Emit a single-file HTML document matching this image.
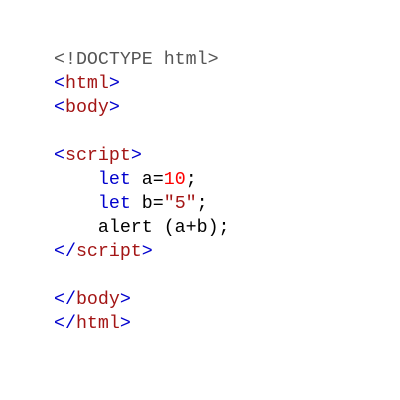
<!DOCTYPE html>
<html><head><style>
body{margin:0;width:400px;height:400px;background:#fff;}
pre{position:absolute;left:54px;top:48px;margin:0;font-family:"Liberation Mono",monospace;font-size:18.3px;line-height:24px;color:#000;}
.g{color:#555}.b{color:#0000cd}.r{color:#a31515}.n{color:#f00}.k{color:#0000cd}
</style></head><body><pre><span class="g">&lt;!DOCTYPE html&gt;</span>
<span class="b">&lt;</span><span class="r">html</span><span class="b">&gt;</span>
<span class="b">&lt;</span><span class="r">body</span><span class="b">&gt;</span>

<span class="b">&lt;</span><span class="r">script</span><span class="b">&gt;</span>
    <span class="k">let</span> a=<span class="n">10</span>;
    <span class="k">let</span> b=<span class="r">"5"</span>;
    alert (a+b);
<span class="b">&lt;/</span><span class="r">script</span><span class="b">&gt;</span>

<span class="b">&lt;/</span><span class="r">body</span><span class="b">&gt;</span>
<span class="b">&lt;/</span><span class="r">html</span><span class="b">&gt;</span></pre></body></html>
